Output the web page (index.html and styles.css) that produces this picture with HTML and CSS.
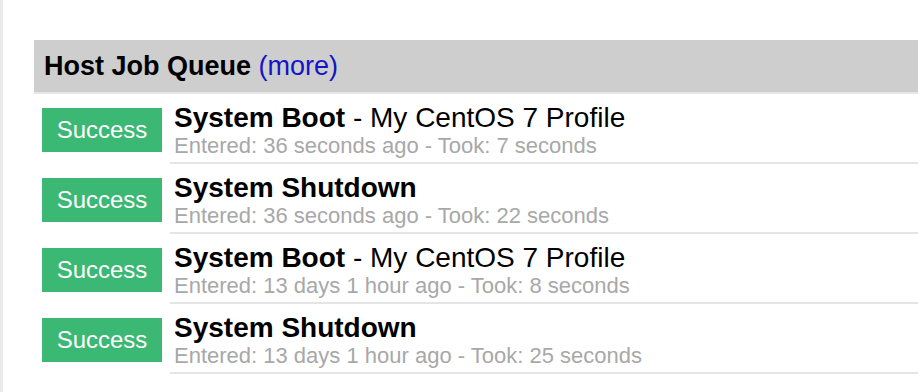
FILE: index.html
```html
<html>
    <head>
        <link rel="stylesheet" href="styles.css">
    </head>
    <body>
        <div id="page">
            <div class="panel">
                <div class="panel-head">
                    <span class="titulo">Host Job Queue</span> <a href="#" class="more">(more)</a>
                </div>
                <div class="job">
                    <div class="badge">Success</div>
                    <div class="info">
                        <div class="nome"><b>System Boot</b> - My CentOS 7 Profile</div>
                        <div class="meta">Entered: 36 seconds ago - Took: 7 seconds</div>
                    </div>
                </div>
                <div class="job">
                    <div class="badge">Success</div>
                    <div class="info">
                        <div class="nome"><b>System Shutdown</b></div>
                        <div class="meta">Entered: 36 seconds ago - Took: 22 seconds</div>
                    </div>
                </div>
                <div class="job">
                    <div class="badge">Success</div>
                    <div class="info">
                        <div class="nome"><b>System Boot</b> - My CentOS 7 Profile</div>
                        <div class="meta">Entered: 13 days 1 hour ago - Took: 8 seconds</div>
                    </div>
                </div>
                <div class="job">
                    <div class="badge">Success</div>
                    <div class="info">
                        <div class="nome"><b>System Shutdown</b></div>
                        <div class="meta">Entered: 13 days 1 hour ago - Took: 25 seconds</div>
                    </div>
                </div>
            </div>
        </div>
    </body>
</html>
```

FILE: styles.css
```css
html {
    height: 100%;
}
body {
    margin: 0;
    height: 100%;
    background-color: white;
    font-family: "Liberation Sans", Arial, sans-serif;
}
#page {
    height: 100%;
    box-sizing: border-box;
    border-left: 3px solid #ebebeb;
    padding-top: 40px;
    padding-left: 31px;
}
.panel-head {
    background-color: #cecece;
    border-bottom: 2px solid #e6e6e6;
    height: 52px;
    line-height: 52px;
    padding-left: 10px;
    font-size: 27px;
    white-space: nowrap;
}
.titulo {
    font-weight: bold;
    color: black;
}
.more {
    color: #1414c8;
    text-decoration: none;
}
.job {
    display: flex;
    align-items: flex-start;
}
.badge {
    flex: none;
    width: 120px;
    height: 44px;
    line-height: 44px;
    margin: 14px 8px 0 8px;
    background-color: #3bb873;
    color: white;
    text-align: center;
    font-size: 24px;
}
.info {
    flex: 1;
    padding: 9px 0 3px 4px;
    border-bottom: 2px solid #e5e5e5;
    white-space: nowrap;
}
.nome {
    font-size: 28px;
    line-height: 30px;
    color: black;
}
.meta {
    font-size: 22px;
    line-height: 26px;
    color: #a8a8a8;
}
```
